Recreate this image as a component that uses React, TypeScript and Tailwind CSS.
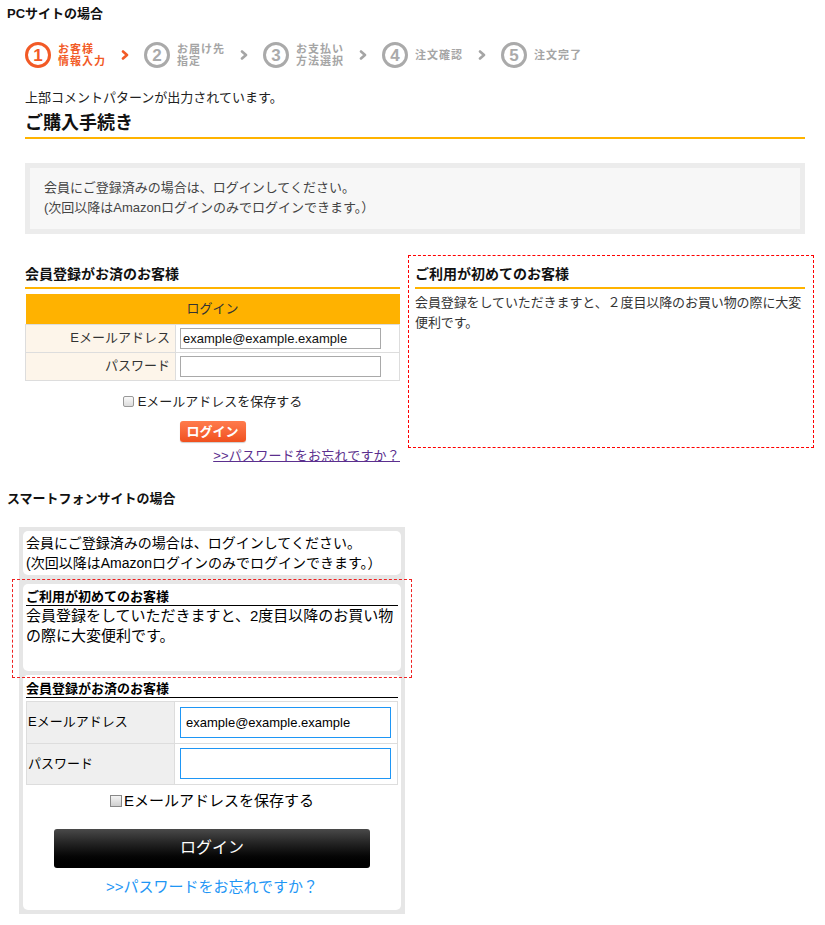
import React from 'react';

const steps = [
  { n: '1', label: ['お客様', '情報入力'], active: true },
  { n: '2', label: ['お届け先', '指定'], active: false },
  { n: '3', label: ['お支払い', '方法選択'], active: false },
  { n: '4', label: ['注文確認'], active: false },
  { n: '5', label: ['注文完了'], active: false },
];

const Chevron: React.FC<{ color: string }> = ({ color }) => (
  <svg width="8" height="10" viewBox="0 0 8 10" className="mr-[15px] shrink-0">
    <polyline points="2,1.5 6,5 2,8.5" fill="none" stroke={color} strokeWidth="2.6" strokeLinecap="round" strokeLinejoin="round" />
  </svg>
);

const StepBar: React.FC = () => (
  <div className="flex items-center h-[30px] ml-[25px]">
    {steps.map((s, i) => (
      <React.Fragment key={s.n}>
        <div className="flex w-[96px] shrink-0 items-center">
          <div
            className={`w-[26px] h-[26px] shrink-0 rounded-full border-[3px] flex items-center justify-center text-[17px] font-bold leading-none ${
              s.active ? 'border-[#f25a26] text-[#f25a26]' : 'border-[#aaaaaa] text-[#aaaaaa]'
            }`}
          >
            {s.n}
          </div>
          <div
            className={`ml-[7px] text-[11px] font-bold leading-[12px] tracking-[1px] ${
              s.active ? 'text-[#f25a26]' : 'text-[#a5a5a5]'
            }`}
          >
            {s.label.map((l) => (
              <div key={l}>{l}</div>
            ))}
          </div>
        </div>
        {i < steps.length - 1 && <Chevron color={i === 0 ? '#f25a26' : '#a5a5a5'} />}
      </React.Fragment>
    ))}
  </div>
);

const PcSection: React.FC = () => (
  <div>
    <h2 className="pl-[7px] pt-[6px] text-[13px] font-bold leading-[16px] text-[#111]">PCサイトの場合</h2>
    <div className="mt-[18px]">
      <StepBar />
    </div>
    <div className="ml-[25px] w-[780px]">
      <p className="mt-[20px] text-[13px] leading-[16px] text-[#222]">上部コメントパターンが出力されています。</p>
      <h1 className="mt-[5px] text-[18px] font-bold leading-[24px] text-[#111]">ご購入手続き</h1>
      <div className="mt-[2px] h-[2px] bg-[#ffb300]"></div>

      <div className="mt-[24px] border-[5px] border-[#ececec] bg-[#f7f7f7] pl-[14px] pt-[10px] pb-[11px] text-[13px] leading-[20px] text-[#444]">
        <p>会員にご登録済みの場合は、ログインしてください。</p>
        <p>(次回以降はAmazonログインのみでログインできます。）</p>
      </div>

      <div className="mt-[21px] flex items-start gap-[8px]">
        <div className="w-[375px] shrink-0">
          <h3 className="mt-[10px] text-[14px] font-bold leading-[18px] text-[#111]">会員登録がお済のお客様</h3>
          <div className="mt-[4px] h-[2px] bg-[#ffb300]"></div>
          <table className="mt-[5px] w-full border-collapse text-[13px]">
            <thead>
              <tr>
                <th colSpan={2} className="h-[30px] bg-[#ffb200] font-normal text-[#333]">ログイン</th>
              </tr>
            </thead>
            <tbody>
              <tr>
                <td className="h-[28px] w-[150px] border border-[#dddddd] bg-[#fdf5ea] pr-[5px] text-right text-[13px] text-[#333]">Eメールアドレス</td>
                <td className="h-[28px] border border-[#dddddd] pl-[4px]">
                  <input
                    readOnly
                    value="example@example.example"
                    className="h-[21px] w-[201px] border border-[#a9a9a9] px-[2px] text-[13px] text-[#111] outline-none"
                  />
                </td>
              </tr>
              <tr>
                <td className="h-[28px] border border-[#dddddd] bg-[#fdf5ea] pr-[5px] text-right text-[13px] text-[#333]">パスワード</td>
                <td className="h-[28px] border border-[#dddddd] pl-[4px]">
                  <input readOnly type="password" className="h-[21px] w-[201px] border border-[#a9a9a9] outline-none" />
                </td>
              </tr>
            </tbody>
          </table>
          <label className="mt-[12px] flex items-center justify-center gap-[4px] text-[13px] leading-[18px] text-[#222]">
            <span className="inline-block h-[11px] w-[11px] rounded-[2px] border border-[#999] bg-gradient-to-b from-[#fafafa] to-[#dcdcdc]"></span>
            Eメールアドレスを保存する
          </label>
          <div className="mt-[10px] flex justify-center">
            <button className="h-[21px] w-[66px] rounded-[3px] bg-gradient-to-b from-[#ff7b4c] to-[#f0501d] text-[13px] font-bold leading-[21px] text-white shadow-[0_1px_1px_rgba(0,0,0,0.2)]">
              ログイン
            </button>
          </div>
          <div className="mt-[5px] text-right text-[13px] leading-[18px]">
            <a href="#" className="tracking-[0.2px] text-[#5b2f8e] underline">&gt;&gt;パスワードをお忘れですか？</a>
          </div>
        </div>

        <div className="h-[193px] w-[406px] shrink-0 border border-dashed border-[#ff0000] pl-[6px] pr-[8px]">
          <h3 className="mt-[9px] text-[14px] font-bold leading-[18px] text-[#111]">ご利用が初めてのお客様</h3>
          <div className="mt-[4px] h-[2px] bg-[#ffb300]"></div>
          <p className="mt-[4px] text-[13px] leading-[20px] tracking-[-0.1px] text-[#333]">
            会員登録をしていただきますと、２度目以降のお買い物の際に大変便利です。
          </p>
        </div>
      </div>
    </div>
  </div>
);

const SpSection: React.FC = () => (
  <div className="mt-[26px]">
    <h2 className="pl-[7px] text-[13px] font-bold leading-[16px] text-[#111]">スマートフォンサイトの場合</h2>
    <div className="ml-[19px] mt-[20px] w-[386px] bg-[#e6e6e6] p-[4px]">
      <div className="rounded-[5px] bg-white px-[3px] pt-[2px] pb-[2px] text-[14px] leading-[20px] text-[#000]">
        <p>会員にご登録済みの場合は、ログインしてください。</p>
        <p>(次回以降はAmazonログインのみでログインできます。）</p>
      </div>

      <div className="relative z-10 -mx-[11px] mt-[4px] h-[99px] border border-dashed border-[#ee2222] px-[10px] pt-[4px]">
        <div className="h-[87px] rounded-[5px] bg-white px-[3px] pt-[5px]">
          <h3 className="border-b border-[#000] text-[13px] font-bold leading-[16px] text-[#000]">ご利用が初めてのお客様</h3>
          <p className="text-[15px] leading-[20px] text-[#000]">
            会員登録をしていただきますと、2度目以降のお買い物
            <br />
            の際に大変便利です。
          </p>
        </div>
      </div>

      <div className="-mt-[3px] rounded-[5px] bg-white px-[3px] pt-[6px] pb-[13px]">
        <h3 className="border-b border-[#000] text-[13px] font-bold leading-[16px] text-[#000]">会員登録がお済のお客様</h3>
        <table className="mt-[3px] w-full border-collapse text-[13px] text-[#000]">
          <tbody>
            <tr>
              <td className="h-[42px] w-[148px] border border-[#dddddd] bg-[#efefef] pl-[1px]">Eメールアドレス</td>
              <td className="h-[42px] border border-[#dddddd] px-[5px]">
                <input
                  readOnly
                  value="example@example.example"
                  className="h-[31px] w-[211px] border border-[#1e96f5] px-[5px] text-[13px] text-[#000] outline-none"
                />
              </td>
            </tr>
            <tr>
              <td className="h-[41px] border border-[#dddddd] bg-[#efefef] pl-[1px]">パスワード</td>
              <td className="h-[41px] border border-[#dddddd] px-[5px]">
                <input readOnly type="password" className="h-[31px] w-[211px] border border-[#1e96f5] outline-none" />
              </td>
            </tr>
          </tbody>
        </table>
        <label className="mt-[6px] flex items-center justify-center gap-[2px] text-[15px] leading-[20px] text-[#000]">
          <span className="inline-block h-[12px] w-[12px] border border-[#888] bg-gradient-to-b from-[#f4f4f4] to-[#cfcfcf]"></span>
          Eメールアドレスを保存する
        </label>
        <div className="mt-[18px] flex justify-center">
          <button className="h-[39px] w-[316px] rounded-[3px] bg-gradient-to-b from-[#4a4a4a] to-[#000] text-[16px] text-white">
            ログイン
          </button>
        </div>
        <div className="mt-[9px] text-center text-[15px] leading-[20px]">
          <a href="#" className="text-[#1e96f5]">&gt;&gt;パスワードをお忘れですか？</a>
        </div>
      </div>
    </div>
  </div>
);

export default function App() {
  return (
    <div className="min-h-[925px] w-[825px] bg-white font-['Liberation_Sans','Noto_Sans_CJK_JP',sans-serif]">
      <PcSection />
      <SpSection />
    </div>
  );
}
